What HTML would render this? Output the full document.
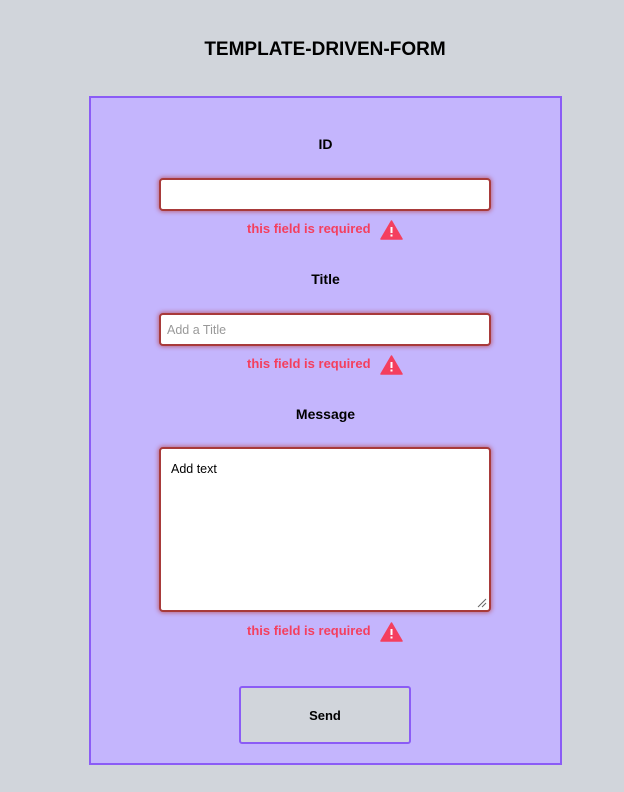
<!DOCTYPE html>
<html><head><meta charset="utf-8"><style>
body{margin:0;width:624px;height:792px;background:#d1d5db;font-family:"Liberation Sans",sans-serif;position:relative;overflow:hidden}
.a{position:absolute}
h1{position:absolute;left:0;width:650px;top:39px;margin:0;text-align:center;font-size:19px;font-weight:bold;color:#000}
.box{left:89px;top:96px;width:469px;height:665px;border:2px solid #8b5cf6;background:#c4b5fd}
.lbl{left:89px;width:473px;text-align:center;font-weight:bold;font-size:14px;color:#000}
.inp{left:159px;width:328px;border:2px solid #a83a3a;border-radius:4px;background:#fff;box-shadow:0 0 4px 1px rgba(180,40,40,.55);font-size:12.5px;color:#999}
.err{left:247px;font-size:13px;font-weight:bold;color:#f43f5e}
.btn{left:239px;top:686px;width:168px;height:54px;border:2px solid #8b5cf6;border-radius:3px;background:#d1d5db;font-weight:bold;font-size:13px;text-align:center;line-height:56px}
</style></head><body>
<h1>TEMPLATE-DRIVEN-FORM</h1>
<div class="a box"></div>
<div class="a lbl" style="top:136px">ID</div>
<div class="a inp" style="top:178px;height:29px"></div>
<div class="a err" style="top:221px">this field is required</div>
<svg class="a" style="left:380px;top:220px" width="23" height="20" viewBox="0 0 23 20"><path d="M11.5 1 L22 19 H1 Z" fill="#f43f5e" stroke="#f43f5e" stroke-width="1.5" stroke-linejoin="round"/><rect x="10.5" y="7" width="2" height="6" fill="#fff"/><rect x="10.5" y="14.5" width="2" height="2" fill="#fff"/></svg>
<div class="a lbl" style="top:271px">Title</div>
<div class="a inp" style="top:313px;height:29px;line-height:30px;text-indent:6px">Add a Title</div>
<div class="a err" style="top:356px">this field is required</div>
<svg class="a" style="left:380px;top:355px" width="23" height="20" viewBox="0 0 23 20"><path d="M11.5 1 L22 19 H1 Z" fill="#f43f5e" stroke="#f43f5e" stroke-width="1.5" stroke-linejoin="round"/><rect x="10.5" y="7" width="2" height="6" fill="#fff"/><rect x="10.5" y="14.5" width="2" height="2" fill="#fff"/></svg>
<div class="a lbl" style="top:406px">Message</div>
<div class="a inp" style="top:447px;height:161px;color:#000"><div style="padding:13px 0 0 10px">Add text</div>
<svg class="a" style="right:2px;bottom:2px" width="10" height="10"><path d="M1 9 L9 1 M5 9 L9 5" stroke="#666" stroke-width="1"/></svg></div>
<div class="a err" style="top:623px">this field is required</div>
<svg class="a" style="left:380px;top:622px" width="23" height="20" viewBox="0 0 23 20"><path d="M11.5 1 L22 19 H1 Z" fill="#f43f5e" stroke="#f43f5e" stroke-width="1.5" stroke-linejoin="round"/><rect x="10.5" y="7" width="2" height="6" fill="#fff"/><rect x="10.5" y="14.5" width="2" height="2" fill="#fff"/></svg>
<div class="a btn">Send</div>
</body></html>
